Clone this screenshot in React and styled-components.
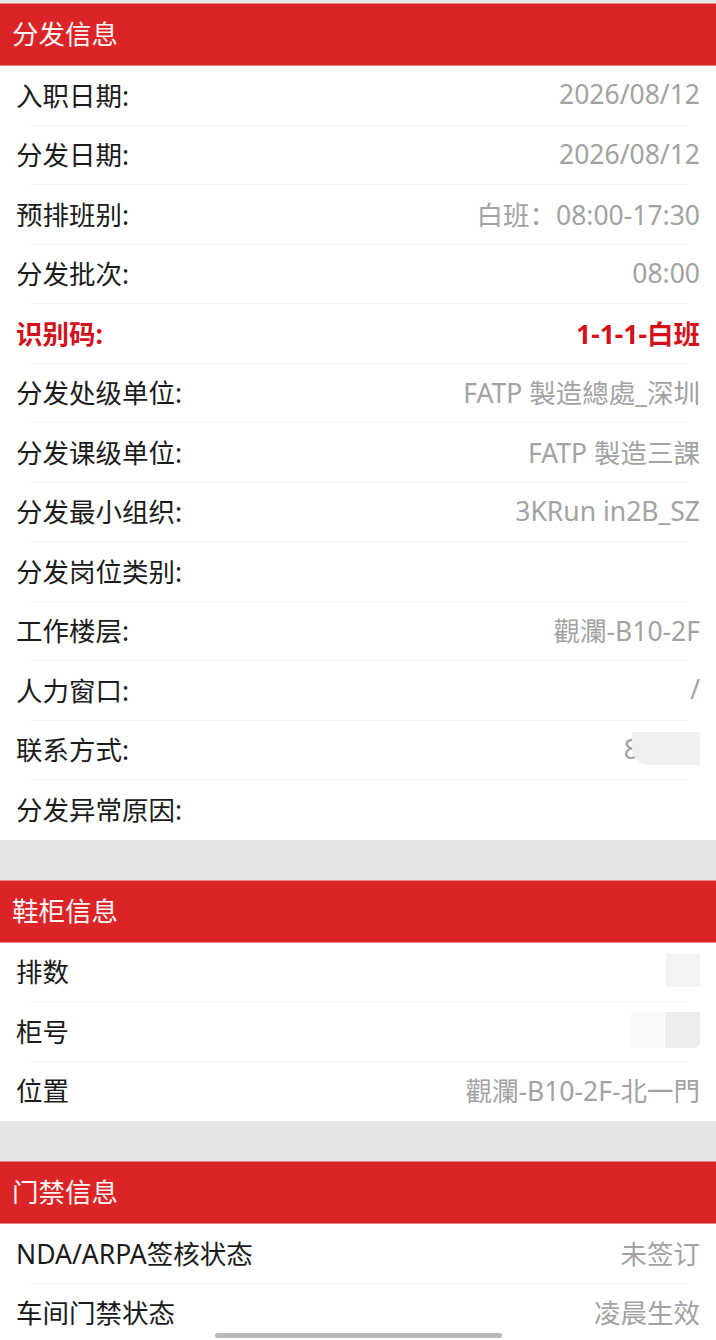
import React from "react";
import styled, { createGlobalStyle } from "styled-components";

const Global = createGlobalStyle`
  html, body { margin: 0; padding: 0; background: #e6e6e6; }
  body { font-family: "Noto Sans", "Noto Sans CJK SC", sans-serif; -webkit-font-smoothing: antialiased; }
  * { box-sizing: border-box; }
`;

const Page = styled.div`
  width: 716px;
  height: 1340px;
  overflow: hidden;
  background: #e6e6e6;
  padding-top: 3px;
  position: relative;
  display: flex;
  flex-direction: column;
  gap: 40px;
`;

const Section = styled.section`
  display: flex;
  flex-direction: column;
  background: #ffffff;
`;

const Header = styled.div`
  height: 63px;
  background: #db2428;
  border-top: 1px solid #ec8a86;
  border-bottom: 1px solid #e9837f;
  display: flex;
  align-items: center;
  padding: 0 0 4px 12px;
  color: #fff5f4;
  font-family: "Noto Sans CJK SC", sans-serif;
  font-size: 26.5px;
`;

const Row = styled.div`
  height: 59.5px;
  display: flex;
  align-items: center;
  justify-content: space-between;
  padding: 0 16px 3px 16px;
  position: relative;
  &:not(:last-child)::after {
    content: "";
    position: absolute;
    left: 30px;
    right: 28px;
    bottom: 0;
    height: 1px;
    background: #f5f5f5;
  }
`;

const Label = styled.span`
  font-family: "Noto Sans", "Noto Sans CJK SC", sans-serif;
  font-size: 26.5px;
  color: ${(p) => (p.$accent ? "#d4111a" : "#1b1b1b")};
  font-weight: ${(p) => (p.$accent ? 700 : 400)};
  white-space: nowrap;
`;

const Value = styled.span`
  font-family: "Noto Sans", "Noto Sans CJK SC", sans-serif;
  font-size: 26.5px;
  color: ${(p) => (p.$accent ? "#d4111a" : "#a2a2a2")};
  font-weight: ${(p) => (p.$accent ? 700 : 400)};
  white-space: nowrap;
  display: flex;
  align-items: center;
`;

const Mask = styled.span`
  display: inline-block;
  width: ${(p) => p.$w}px;
  height: ${(p) => p.$h}px;
  margin-left: ${(p) => p.$overlap || 0}px;
  background: ${(p) => p.$bg || "#efefef"};
  border-radius: ${(p) => p.$radius || "0"};
  filter: blur(0.6px);
`;

const MaskedValue = styled.span`
  display: flex;
  align-items: center;
  color: #a2a2a2;
  font-family: "Noto Sans", sans-serif;
  font-size: 26.5px;
`;

const HomeBar = styled.div`
  position: absolute;
  left: 215px;
  bottom: 2px;
  width: 287px;
  height: 5px;
  border-radius: 3px;
  background: #b9b9b9;
`;

const dispatch = [
  ["入职日期:", "2026/08/12"],
  ["分发日期:", "2026/08/12"],
  ["预排班别:", "白班：08:00-17:30"],
  ["分发批次:", "08:00"],
  ["识别码:", "1-1-1-白班", true],
  ["分发处级单位:", "FATP 製造總處_深圳"],
  ["分发课级单位:", "FATP 製造三課"],
  ["分发最小组织:", "3KRun in2B_SZ"],
  ["分发岗位类别:", ""],
  ["工作楼层:", "觀瀾-B10-2F"],
  ["人力窗口:", "/"],
  ["联系方式:", "__mask__"],
  ["分发异常原因:", ""],
];

export default function App() {
  return (
    <>
      <Global />
      <Page>
        <Section>
          <Header>分发信息</Header>
          {dispatch.map(([l, v, a]) => (
            <Row key={l}>
              <Label $accent={a}>{l}</Label>
              {v === "__mask__" ? (
                <MaskedValue>
                  <span>8</span>
                  <Mask $w={68} $h={33} $overlap={-7} $radius="0 0 0 18px" />
                </MaskedValue>
              ) : (
                <Value $accent={a}>{v}</Value>
              )}
            </Row>
          ))}
        </Section>
        <Section>
          <Header>鞋柜信息</Header>
          <Row>
            <Label>排数</Label>
            <Mask $w={34} $h={33} $bg="#f4f4f4" />
          </Row>
          <Row>
            <Label>柜号</Label>
            <MaskedValue>
              <Mask $w={34} $h={36} $bg="#fafafa" />
              <Mask $w={35} $h={36} $bg="#eeeeee" $radius="0 0 6px 0" />
            </MaskedValue>
          </Row>
          <Row>
            <Label>位置</Label>
            <Value>觀瀾-B10-2F-北一門</Value>
          </Row>
        </Section>
        <Section>
          <Header>门禁信息</Header>
          <Row>
            <Label>NDA/ARPA签核状态</Label>
            <Value>未签订</Value>
          </Row>
          <Row>
            <Label>车间门禁状态</Label>
            <Value>凌晨生效</Value>
          </Row>
        </Section>
        <HomeBar />
      </Page>
    </>
  );
}
